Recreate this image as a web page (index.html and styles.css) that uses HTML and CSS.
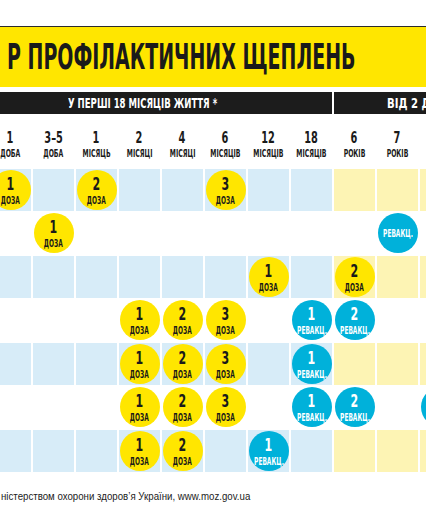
FILE: index.html
```html
<!DOCTYPE html>
<html lang="uk">

<head>
    <meta charset="UTF-8" />
    <meta name="viewport" content="width=device-width, initial-scale=1.0" />
    <title>Календар профілактичних щеплень</title>
    <link rel="stylesheet" href="styles.css">
</head>

<body>
    <div class="page">
        <div class="banner">
            <h1 class="title"><span>Р ПРОФІЛАКТИЧНИХ ЩЕПЛЕНЬ</span></h1>
        </div>

        <div class="schedule">
            <div class="groups">
                <div class="group first"><span>У ПЕРШІ 18 МІСЯЦІВ ЖИТТЯ *</span></div>
                <div class="group second"><span>ВІД 2 ДО 18 РОКІВ</span></div>
            </div>

            <div class="ages">
                <div class="age"><b>1</b><small>ДОБА</small></div>
                <div class="age"><b>3–5</b><small>ДОБА</small></div>
                <div class="age"><b>1</b><small>МІСЯЦЬ</small></div>
                <div class="age"><b>2</b><small>МІСЯЦІ</small></div>
                <div class="age"><b>4</b><small>МІСЯЦІ</small></div>
                <div class="age"><b>6</b><small>МІСЯЦІВ</small></div>
                <div class="age"><b>12</b><small>МІСЯЦІВ</small></div>
                <div class="age"><b>18</b><small>МІСЯЦІВ</small></div>
                <div class="age"><b>6</b><small>РОКІВ</small></div>
                <div class="age"><b>7</b><small>РОКІВ</small></div>
                <div class="age"></div>
            </div>

            <div class="rows">
                <!-- row 1 -->
                <div class="row tint">
                    <div class="cell"><div class="dot yellow"><b>1</b><small>ДОЗА</small></div></div>
                    <div class="cell"></div>
                    <div class="cell"><div class="dot yellow"><b>2</b><small>ДОЗА</small></div></div>
                    <div class="cell"></div>
                    <div class="cell"></div>
                    <div class="cell"><div class="dot yellow"><b>3</b><small>ДОЗА</small></div></div>
                    <div class="cell"></div>
                    <div class="cell"></div>
                    <div class="cell late"></div>
                    <div class="cell late"></div>
                    <div class="cell late"></div>
                </div>
                <!-- row 2 -->
                <div class="row">
                    <div class="cell"></div>
                    <div class="cell"><div class="dot yellow"><b>1</b><small>ДОЗА</small></div></div>
                    <div class="cell"></div>
                    <div class="cell"></div>
                    <div class="cell"></div>
                    <div class="cell"></div>
                    <div class="cell"></div>
                    <div class="cell"></div>
                    <div class="cell late"></div>
                    <div class="cell late"><div class="dot blue"><small>РЕВАКЦ.</small></div></div>
                    <div class="cell late"></div>
                </div>
                <!-- row 3 -->
                <div class="row tint">
                    <div class="cell"></div>
                    <div class="cell"></div>
                    <div class="cell"></div>
                    <div class="cell"></div>
                    <div class="cell"></div>
                    <div class="cell"></div>
                    <div class="cell"><div class="dot yellow"><b>1</b><small>ДОЗА</small></div></div>
                    <div class="cell"></div>
                    <div class="cell late"><div class="dot yellow"><b>2</b><small>ДОЗА</small></div></div>
                    <div class="cell late"></div>
                    <div class="cell late"></div>
                </div>
                <!-- row 4 -->
                <div class="row">
                    <div class="cell"></div>
                    <div class="cell"></div>
                    <div class="cell"></div>
                    <div class="cell"><div class="dot yellow"><b>1</b><small>ДОЗА</small></div></div>
                    <div class="cell"><div class="dot yellow"><b>2</b><small>ДОЗА</small></div></div>
                    <div class="cell"><div class="dot yellow"><b>3</b><small>ДОЗА</small></div></div>
                    <div class="cell"></div>
                    <div class="cell"><div class="dot blue"><b>1</b><small>РЕВАКЦ.</small></div></div>
                    <div class="cell late"><div class="dot blue"><b>2</b><small>РЕВАКЦ.</small></div></div>
                    <div class="cell late"></div>
                    <div class="cell late"></div>
                </div>
                <!-- row 5 -->
                <div class="row tint">
                    <div class="cell"></div>
                    <div class="cell"></div>
                    <div class="cell"></div>
                    <div class="cell"><div class="dot yellow"><b>1</b><small>ДОЗА</small></div></div>
                    <div class="cell"><div class="dot yellow"><b>2</b><small>ДОЗА</small></div></div>
                    <div class="cell"><div class="dot yellow"><b>3</b><small>ДОЗА</small></div></div>
                    <div class="cell"></div>
                    <div class="cell"><div class="dot blue"><b>1</b><small>РЕВАКЦ.</small></div></div>
                    <div class="cell late"></div>
                    <div class="cell late"></div>
                    <div class="cell late"></div>
                </div>
                <!-- row 6 -->
                <div class="row">
                    <div class="cell"></div>
                    <div class="cell"></div>
                    <div class="cell"></div>
                    <div class="cell"><div class="dot yellow"><b>1</b><small>ДОЗА</small></div></div>
                    <div class="cell"><div class="dot yellow"><b>2</b><small>ДОЗА</small></div></div>
                    <div class="cell"><div class="dot yellow"><b>3</b><small>ДОЗА</small></div></div>
                    <div class="cell"></div>
                    <div class="cell"><div class="dot blue"><b>1</b><small>РЕВАКЦ.</small></div></div>
                    <div class="cell late"><div class="dot blue"><b>2</b><small>РЕВАКЦ.</small></div></div>
                    <div class="cell late"></div>
                    <div class="cell late"><div class="dot blue"></div></div>
                </div>
                <!-- row 7 -->
                <div class="row tint">
                    <div class="cell"></div>
                    <div class="cell"></div>
                    <div class="cell"></div>
                    <div class="cell"><div class="dot yellow"><b>1</b><small>ДОЗА</small></div></div>
                    <div class="cell"><div class="dot yellow"><b>2</b><small>ДОЗА</small></div></div>
                    <div class="cell"></div>
                    <div class="cell"><div class="dot blue"><b>1</b><small>РЕВАКЦ.</small></div></div>
                    <div class="cell"></div>
                    <div class="cell late"></div>
                    <div class="cell late"></div>
                    <div class="cell late"></div>
                </div>
            </div>
        </div>

        <p class="source"><span>ністерством охорони здоров’я України, www.moz.gov.ua</span></p>
    </div>
</body>

</html>
```

FILE: styles.css
```css
body {
    margin: 0;
    background: #fff;
    font-family: "DejaVu Sans Condensed", "DejaVu Sans", sans-serif;
}

.page {
    width: 426px;
    height: 528px;
    padding-top: 26px;
    box-sizing: border-box;
    overflow: hidden;
}

/* yellow title strip */
.banner {
    height: 60px;
    border-top: 1px solid #2b2b2b;
    background: #ffe600;
    display: flex;
    align-items: center;
    padding-left: 7px;
}

.title {
    margin: 0;
    font-size: 36px;
    font-weight: bold;
    line-height: 1;
    color: #1a1a1a;
    white-space: nowrap;
}

.title span {
    display: inline-block;
    transform: scaleX(.586);
    transform-origin: left center;
}

/* table: first column is cut off by the left edge */
.schedule {
    margin-left: -10px;
    margin-top: 5px;
}

.groups,
.ages,
.row {
    display: grid;
    grid-template-columns: repeat(11, 41px);
    column-gap: 2px;
}

.group {
    height: 22px;
    background: #1c1c1c;
    color: #fff;
    font-size: 14px;
    font-weight: bold;
    display: flex;
    align-items: center;
    white-space: nowrap;
    overflow: hidden;
}

.group span {
    display: inline-block;
    transform: scaleX(.68);
    transform-origin: left center;
}

.group.first {
    grid-column: 1 / 9;
    padding-left: 78px;
}

.group.second {
    grid-column: 9 / 12;
    padding-left: 53px;
}

.group.second span {
    transform: scaleX(.8);
}

.ages {
    height: 55px;
}

.age {
    display: flex;
    flex-direction: column;
    align-items: center;
    padding-top: 14px;
    color: #1a1a1a;
    white-space: nowrap;
}

.age b {
    font-size: 16px;
    line-height: 19px;
    transform: scaleX(.68);
}

.age small {
    font-size: 11px;
    line-height: 13px;
    font-weight: bold;
    transform: scaleX(.62);
}

.rows {
    display: flex;
    flex-direction: column;
    gap: 2px;
}

.row {
    height: 41.5px;
}

.cell {
    display: flex;
    align-items: center;
    justify-content: center;
}

.row.tint .cell {
    background: #d7ecf8;
}

.row.tint .cell.late {
    background: #fdf4b4;
}

.dot {
    flex: none;
    width: 40px;
    height: 40px;
    border-radius: 50%;
    display: flex;
    flex-direction: column;
    align-items: center;
    justify-content: center;
    font-weight: bold;
    white-space: nowrap;
}

.dot.yellow {
    background: #ffe600;
    color: #1a1a1a;
}

.dot.blue {
    background: #00b1da;
    color: #fff;
}

.dot b {
    font-size: 17px;
    line-height: 20px;
    transform: scaleX(.72);
}

.dot small {
    font-size: 10.5px;
    line-height: 12px;
    transform: scaleX(.62);
}

.source {
    margin: 18px 0 0 1px;
    font-family: "Liberation Sans", Arial, sans-serif;
    font-size: 11px;
    line-height: 13px;
    color: #222;
    white-space: nowrap;
}

.source span {
    display: inline-block;
    transform: scaleX(.88);
    transform-origin: left center;
}
```
